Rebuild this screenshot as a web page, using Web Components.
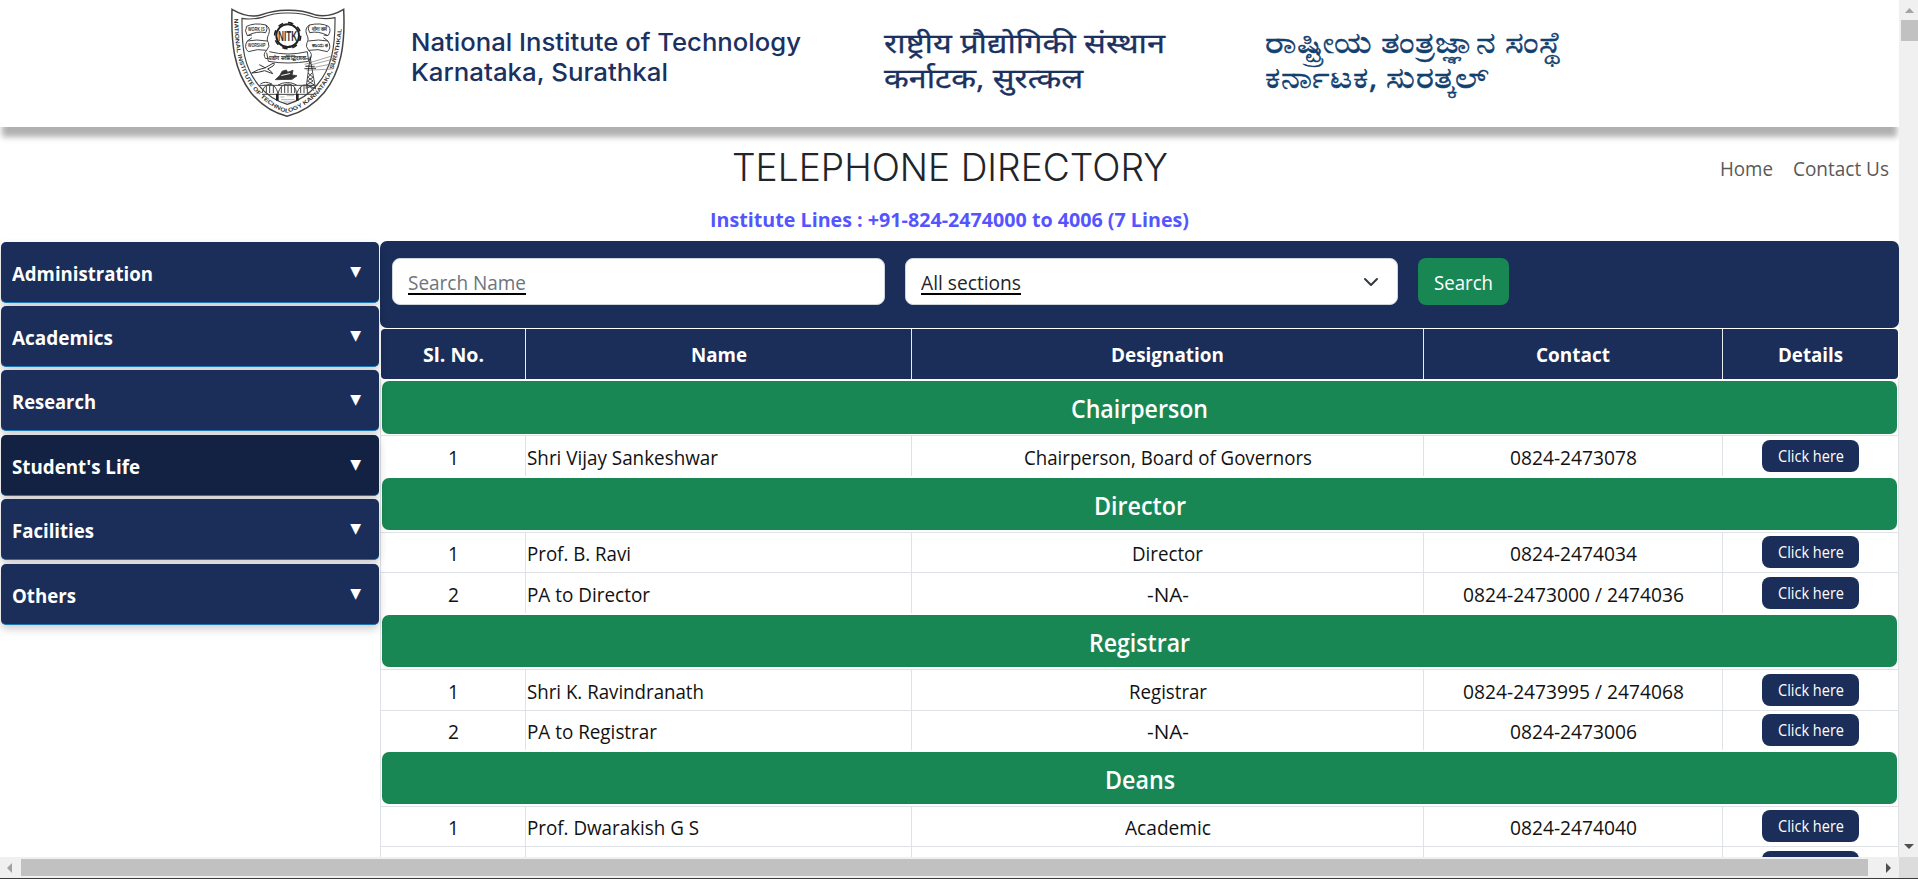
<!DOCTYPE html>
<html lang="en">
<head>
<meta charset="utf-8">
<title>Telephone Directory</title>
<style>
  html, body { margin: 0; height: 879px; overflow: hidden; background: #fff; }
  body { font-family: "Open Sans", "Noto Sans", sans-serif; font-size: 19.6px; color: #212529; }
</style>
</head>
<body>
<directory-app></directory-app>
<script>
const define = (name, html, setup) => {
  const template = document.createElement('template');
  template.innerHTML = html;
  customElements.define(name, class extends HTMLElement {
    connectedCallback() {
      if (this.shadowRoot) return;
      this.attachShadow({ mode: 'open' }).append(template.content.cloneNode(true));
      if (setup) setup(this, this.shadowRoot);
    }
  });
};

/* Text that takes exactly the width given in its "w" attribute. */
define('fit-text', `
  <style>
    :host { display: inline-block; white-space: nowrap; text-align: left; }
    span { display: inline-block; transform-origin: 0 50%; text-decoration: inherit; }
  </style><span><slot></slot></span>`, (el, root) => {
  const span = root.querySelector('span');
  const w = +el.getAttribute('w');
  const natural = span.getBoundingClientRect().width;
  el.style.width = w + 'px';
  if (natural) span.style.transform = `scaleX(${w / natural})`;
});

define('nitk-crest', `
  <style>
    :host { display: block; width: 114px; height: 110px; }
    svg { display: block; }
    text { font-family: "Liberation Sans", Arial, sans-serif; fill: #333; }
  </style>
  <svg width="114" height="110" viewBox="33 24 342 330" fill="none" stroke="#444" stroke-width="3">
    <defs>
      <path id="rim" d="M43 55C44 160 62 235 118 288C148 315 175 333 201 338C230 332 262 312 288 288C344 232 362 155 367 52"/>
    </defs>
    <path stroke-width="4.5" d="M36 28Q85 56 122 45Q165 30 203 31Q245 30 284 44Q325 55 371 28C376 130 364 215 312 278C280 316 242 338 201 349C160 338 122 314 93 278C42 212 33 130 36 28Z"/>
    <path stroke-width="3.5" d="M66 55Q94 60 126 52Q165 38 203 39Q245 38 280 51Q315 60 345 53C346 145 334 205 291 255C265 285 235 303 202 313C168 303 138 283 116 256C72 202 65 145 66 55Z"/>
    <text font-size="17" font-weight="bold" stroke="none"><textPath href="#rim" textLength="672" lengthAdjust="spacingAndGlyphs">NATIONAL INSTITUTE OF TECHNOLOGY KARNATAKA, SURATHKAL</textPath></text>
    <circle cx="203" cy="107" r="34" stroke="#222" stroke-width="6"/>
    <circle cx="203" cy="107" r="39" stroke="#222" stroke-width="5" stroke-dasharray="16 14.6"/>
    <text x="203" y="123" font-size="45" font-weight="bold" text-anchor="middle" stroke="none" textLength="58" lengthAdjust="spacingAndGlyphs">NITK</text>
    <path d="M80 79Q72 92 82 107L96 105M80 79Q103 67 138 75Q145 86 137 98Q110 92 82 107M138 75Q153 85 146 103Q138 119 145 128Q151 138 140 151Q112 145 85 155Q70 142 82 123Q110 117 141 123M82 123L96 113"/>
    <path d="M326 79Q335 92 324 107L311 105M326 79Q302 67 268 75Q261 86 269 98Q296 92 324 107M268 75Q253 85 260 103Q268 119 261 128Q255 138 266 151Q294 145 322 155Q336 142 324 123Q296 117 265 123M324 123L310 113"/>
    <g stroke="none" font-size="16" font-weight="bold">
      <text x="84" y="94" textLength="50" lengthAdjust="spacingAndGlyphs">WORK IS</text>
      <text x="84" y="142" textLength="52" lengthAdjust="spacingAndGlyphs">WORSHIP</text>
      <text x="277" y="94" textLength="44" lengthAdjust="spacingAndGlyphs">योगः कर्म</text>
      <text x="277" y="142" textLength="44" lengthAdjust="spacingAndGlyphs">ಕಾಯಕ</text>
    </g>
    <path d="M140 151Q127 163 137 176L150 174M148 155Q203 169 262 155L266 184Q203 194 145 184L140 158M266 151Q280 163 270 178L258 176"/>
    <text x="147" y="181" font-size="17" font-weight="bold" stroke="none" textLength="112" lengthAdjust="spacingAndGlyphs">उद्योगः सर्वसिद्धिदायकः</text>
    <path stroke="#333" d="M95 219Q115 207 134 204L159 190Q168 188 159 198L143 207Q154 213 158 221L134 212Q116 218 95 219ZM118 194L137 204"/>
    <path fill="#333" d="M166 239L180 226L186 214L199 210L203 217L219 211L216 225L231 227L216 238Z"/>
    <path fill="#fff" stroke="none" d="M184 225L211 219L210 222L184 228Z"/>
    <path stroke="#777" stroke-width="2" d="M254 193L345 165M255 199L345 176M258 207L344 190M260 211L335 207"/>
    <path stroke="#222" stroke-width="2.5" d="M258 266L268 190L273 190L287 268M253 206H288M257 199H284M264 219L279 232L262 243L282 254L260 265M276 219L264 232L279 243L261 254L284 265M268 190L271 170L273 190"/>
    <path d="M118 256H286M126 279Q132 253 149 253Q168 254 174 281Q181 252 204 252Q227 253 230 281Q240 252 260 255Q275 260 281 272M126 283H282M121 252Q135 242 156 252M174 255Q202 240 230 255M139 257V278M149 255V279M160 257V279M184 260V279M194 255V279M204 253V279M214 255V279M224 262V279M242 260V279M252 256V279M262 257V279"/>
    <path stroke="#222" stroke-width="8" d="M172 281V302M232 281V302"/>
    <path stroke="#888" stroke-width="2" d="M181 291H193M200 287H222M183 299H224M190 306H216"/>
  </svg>`);

define('site-header', `
  <style>
    :host { display: flex; position: relative; z-index: 2; height: 127px; box-sizing: border-box; padding: 8px 0 0 231px;
      background: #fff; color: #1b315f; box-shadow: 0 12px 6px -2px rgba(0,0,0,.31); font-size: 25px; }
    div { display: flex; flex-direction: column; align-items: flex-start; font-weight: 500; }
    .en { margin: 19px 0 0 66px; font-family: Inter, sans-serif; font-size: 24.6px; }
    .en fit-text { line-height: 30px; }
    .hi { margin: 17px 0 0 83px; font-size: 27px; font-weight: 400; -webkit-text-stroke: .3px; }
    .hi fit-text, .kn fit-text { line-height: 35px; }
    .kn { margin: 16px 0 0 100px; font-size: 30px; font-weight: 400; color: #12406f; -webkit-text-stroke: .5px; }
  </style>
  <nitk-crest></nitk-crest>
  <div class="en"><fit-text w="390">National Institute of Technology</fit-text><fit-text w="257">Karnataka, Surathkal</fit-text></div>
  <div class="hi"><fit-text w="281">राष्ट्रीय प्रौद्योगिकी संस्थान</fit-text><fit-text w="199">कर्नाटक, सुरत्कल</fit-text></div>
  <div class="kn"><fit-text w="297">ರಾಷ್ಟ್ರೀಯ ತಂತ್ರಜ್ಞಾನ ಸಂಸ್ಥೆ</fit-text><fit-text w="223">ಕರ್ನಾಟಕ, ಸುರತ್ಕಲ್</fit-text></div>`);

define('page-title', `
  <style>
    :host { display: grid; grid-template-columns: 1fr 436px 1fr; height: 114px; align-content: start; }
    h1 { grid-column: 2; margin: 17px 0 0; font: 350 38px/46px Inter, sans-serif; color: #212529; }
    nav { display: flex; gap: 20px; justify-content: flex-end; padding: 29px 10px 0 0; line-height: 26px; color: #595959; }
    p { grid-column: 1 / -1; margin: 17px 0 0; text-align: center; font-weight: 700; line-height: 26px; color: #5555ff; font-size: 19.4px; }
  </style>
  <h1><fit-text w="436">TELEPHONE DIRECTORY</fit-text></h1>
  <nav><fit-text w="53">Home</fit-text><fit-text w="96">Contact Us</fit-text></nav>
  <p><fit-text w="479">Institute Lines : +91-824-2474000 to 4006 (7 Lines)</fit-text></p>`);

define('menu-item', `
  <style>
    :host { display: flex; justify-content: space-between; box-sizing: border-box; height: 61px; padding: 18px 18px 0 11px;
      border-bottom: 1px solid #1f78b4; border-radius: 5px; background: #1b2e59; color: #fff; font-weight: 700; line-height: 27px; font-size: 19.4px;
      box-shadow: 0 4px 8px rgba(0,0,0,.2); position: relative; }
    :host([active]) { background: #132242; }
    i { font: 14px/22px "DejaVu Sans", sans-serif; }
  </style><slot></slot><i>▼</i>`);

define('side-menu', `
  <style>
    :host { display: flex; flex-direction: column; gap: 3px; width: 378px; padding: 1px 1px 0; }
    .gap { margin-top: 1px; }
  </style>
  <menu-item><fit-text w="141">Administration</fit-text></menu-item>
  <menu-item><fit-text w="101">Academics</fit-text></menu-item>
  <menu-item><fit-text w="84">Research</fit-text></menu-item>
  <menu-item class="gap" active><fit-text w="128">Student's Life</fit-text></menu-item>
  <menu-item><fit-text w="82">Facilities</fit-text></menu-item>
  <menu-item class="gap"><fit-text w="64">Others</fit-text></menu-item>`);

define('search-bar', `
  <style>
    :host { display: flex; gap: 20px; box-sizing: border-box; height: 87px; padding: 17px 12px; background: #1b2e59; border-radius: 7px; }
    .field { display: flex; justify-content: space-between; box-sizing: border-box; width: 493px; height: 47px; padding: 9px 18px 0 15px;
      border: 1px solid #ced4da; border-radius: 8px; background: #fff; line-height: 30px; color: #212529; }
    .hint { color: #6c757d; }
    u { text-decoration: none; }
    u fit-text { height: 25px; border-bottom: 2px solid #000; }
    svg { margin-top: 8px; }
    button { width: 91px; height: 47px; padding: 2px 0 0; border: 0; border-radius: 8px; background: #198754; color: #fff; font: inherit; line-height: 45px; }
  </style>
  <div class="field hint"><u><fit-text w="118">Search Name</fit-text></u></div>
  <div class="field"><u><fit-text w="100">All sections</fit-text></u>
    <svg width="16" height="12" fill="none" stroke="#343a40" stroke-width="2" stroke-linecap="round" stroke-linejoin="round"><path d="M2 3l6 6 6-6"/></svg></div>
  <button><fit-text w="59">Search</fit-text></button>`);

define('table-head', `
  <style>
    :host { display: grid; grid-template-columns: 144px 385px 511px 298px 175px; gap: 1px; height: 50px; margin: 1px 1px 0; color: #fff; font-weight: 700;
      line-height: 52px; text-align: center; background: #e9ecef; border-radius: 4px; overflow: hidden; font-size: 19.4px; }
    div { background: #1b2e59; }
  </style>
  <div><fit-text w="61">Sl. No.</fit-text></div><div><fit-text w="56">Name</fit-text></div><div><fit-text w="113">Designation</fit-text></div>
  <div><fit-text w="74">Contact</fit-text></div><div><fit-text w="65">Details</fit-text></div>`);

define('section-band', `
  <style>
    :host { display: block; height: 56px; box-sizing: border-box; padding: 2px 1px 0 1px; }
    div { height: var(--band, 52px); line-height: 55px; border-radius: 7px; background: #198754; color: #fff; text-align: center; font-size: 24.4px; font-weight: 600; }
  </style><div><slot></slot></div>`);

define('contact-row', `
  <style>
    :host { display: grid; grid-template-columns: 144px 385px 511px 298px 175px; gap: 1px; height: var(--h, 41px); box-sizing: border-box;
      border-top: 1px solid #dee2e6; background: linear-gradient(#dee2e6, #dee2e6) 144px 0 / 1px 100% no-repeat,
      linear-gradient(#dee2e6, #dee2e6) 530px 0 / 1px 100% no-repeat, linear-gradient(#dee2e6, #dee2e6) 1042px 0 / 1px 100% no-repeat,
      linear-gradient(#dee2e6, #dee2e6) 1341px 0 / 1px 100% no-repeat; color: #111; text-align: center; line-height: 43px; }
    :host([short]) { --h: 40px; line-height: 42px; }
    .name { text-align: left; padding-left: 1px; }
    .act { padding-top: 4px; }
    :host([short]) .act { padding-top: 3px; }
    button { display: block; margin: 0 auto; width: 97px; height: 32px; padding: 0; border: 0; border-radius: 8px; background: #1b2e59; color: #fff; font: 15.4px/31px "Open Sans", sans-serif; }
  </style>
  <div><slot name="no"></slot></div><div class="name"><slot name="name"></slot></div><div><slot name="role"></slot></div>
  <div><slot name="tel"></slot></div><div class="act"><button><fit-text w="66">Click here</fit-text></button></div>`);

define('contact-table', `
  <style>
    :host { display: block; margin: 0 0 0 1px; width: 1517px; border-left: 0; box-shadow: -1px 0 #dee2e6, 1px 0 #dee2e6; }
    section-band:first-child { --band: 53px; }
  </style><div></div>`, (el, root) => {
  const data = [
    ['Chairperson', 137, [['1', 'Shri Vijay Sankeshwar', 191, 'Chairperson, Board of Governors', 288, '0824-2473078', 127]]],
    ['Director', 92, [['1', 'Prof. B. Ravi', 104, 'Director', 71, '0824-2474034', 127, 1], ['2', 'PA to Director', 123, '-NA-', 42, '0824-2473000 / 2474036', 221]]],
    ['Registrar', 101, [['1', 'Shri K. Ravindranath', 177, 'Registrar', 78, '0824-2473995 / 2474068', 221], ['2', 'PA to Registrar', 130, '-NA-', 42, '0824-2473006', 127, 1]]],
    ['Deans', 70, [['1', 'Prof. Dwarakish G S', 172, 'Academic', 86, '0824-2474040', 127, 1], ['', '', 0, '', 0, '', 0]]]
  ];
  root.querySelector('div').innerHTML = data.map(([title, w, rows]) =>
    `<section-band><fit-text w="${w}">${title}</fit-text></section-band>` +
    rows.map(([no, name, nw, role, rw, tel, tw, short]) =>
      `<contact-row ${short ? 'short' : ''}>` + (no ? `<fit-text slot="no" w="11">${no}</fit-text><fit-text slot="name" w="${nw}">${name}</fit-text>` +
      `<fit-text slot="role" w="${rw}">${role}</fit-text><fit-text slot="tel" w="${tw}">${tel}</fit-text>` : '') + `</contact-row>`).join('')).join('');
});

define('scroll-bar', `
  <style>
    :host { display: flex; box-sizing: border-box; background: #f0f0f0; }
    :host([vertical]) { flex-direction: column; justify-content: space-between; padding: 8px 0 8px 2px; }
    .thumb { background: #c1c1c1; }
    :host(:not([vertical])) { align-items: center; justify-content: space-between; padding: 0 8px 0 7px; }
    :host([vertical]) .thumb { width: 17px; height: 21px; margin: 7px 0 auto; }
    :host([vertical]) .h, :host(:not([vertical])) .v { display: none; }
    :host(:not([vertical])) .thumb { width: 1847px; height: 17px; margin: 0 auto 0 9px; }
    svg { display: block; }
  </style>
  <svg class="v" width="17" height="5"><path d="M4 5h9L8.500 0z" fill="#a3a3a3"/></svg>
  <svg class="h" width="5" height="10"><path d="M5 0v10L0 5z" fill="#a3a3a3"/></svg>
  <div class="thumb"></div>
  <svg class="v" width="16" height="5"><path d="M3 0h10L8 5z" fill="#505050"/></svg>
  <svg class="h" width="5" height="10"><path d="M0 0v10l5-5z" fill="#505050"/></svg>`);

define('directory-app', `
  <style>
    :host { display: grid; grid-template: 857px 21px 1px / 1899px 19px; width: 1918px; height: 879px; }
    .view { overflow: hidden; height: 857px; }
    main { display: flex; }
    .list { width: 1519px; flex: none; }
    .corner { background: #dcdcdc; }
    .edge { grid-column: 1 / -1; background: #3c3c3c; }
  </style>
  <div class="view">
    <site-header></site-header>
    <page-title></page-title>
    <main>
      <side-menu></side-menu>
      <div class="list"><search-bar></search-bar><table-head></table-head><contact-table></contact-table></div>
    </main>
  </div>
  <scroll-bar vertical></scroll-bar>
  <scroll-bar></scroll-bar>
  <div class="corner"></div>
  <div class="edge"></div>`);
</script>
</body>
</html>
